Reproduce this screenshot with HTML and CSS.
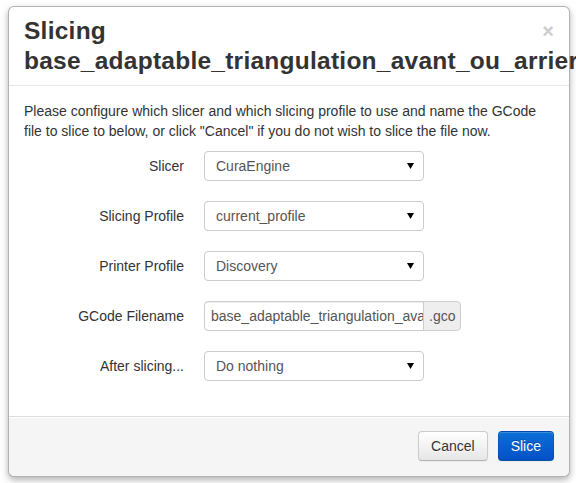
FILE: index.html
```
<!DOCTYPE html>
<html>
<head>
<meta charset="utf-8">
<link rel="stylesheet" href="styles.css">
</head>
<body>
<div class="modal">
  <div class="modal-header">
    <span class="close">×</span>
    <h3>Slicing base_adaptable_triangulation_avant_ou_arrier</h3>
  </div>
  <div class="modal-body">
    <p>Please configure which slicer and which slicing profile to use and name the GCode file to slice to below, or click "Cancel" if you do not wish to slice the file now.</p>
    <div class="form">
      <div class="group">
        <label class="control-label">Slicer</label>
        <div class="controls">
          <div class="select"><span>CuraEngine</span><svg class="arrow" width="7" height="6" viewBox="0 0 7 6"><path d="M0 0H7L3.5 6Z" fill="#000"/></svg></div>
        </div>
      </div>
      <div class="group">
        <label class="control-label">Slicing Profile</label>
        <div class="controls">
          <div class="select"><span>current_profile</span><svg class="arrow" width="7" height="6" viewBox="0 0 7 6"><path d="M0 0H7L3.5 6Z" fill="#000"/></svg></div>
        </div>
      </div>
      <div class="group">
        <label class="control-label">Printer Profile</label>
        <div class="controls">
          <div class="select"><span>Discovery</span><svg class="arrow" width="7" height="6" viewBox="0 0 7 6"><path d="M0 0H7L3.5 6Z" fill="#000"/></svg></div>
        </div>
      </div>
      <div class="group">
        <label class="control-label">GCode Filename</label>
        <div class="controls">
          <div class="input-append"><div class="input">base_adaptable_triangulation_avant_ou_arrier</div><span class="add-on">.gco</span></div>
        </div>
      </div>
      <div class="group">
        <label class="control-label">After slicing...</label>
        <div class="controls">
          <div class="select"><span>Do nothing</span><svg class="arrow" width="7" height="6" viewBox="0 0 7 6"><path d="M0 0H7L3.5 6Z" fill="#000"/></svg></div>
        </div>
      </div>
    </div>
  </div>
  <div class="modal-footer">
    <button class="btn">Cancel</button>
    <button class="btn btn-primary">Slice</button>
  </div>
</div>
</body>
</html>
```

FILE: styles.css
```
html, body {
  margin: 0;
  padding: 0;
  background: #fff;
}
body {
  font-family: "Liberation Sans", Arial, sans-serif;
  font-size: 14px;
  line-height: 20px;
  color: #333;
  width: 576px;
  height: 483px;
  overflow: hidden;
}
.modal {
  margin: 6px 0 0 8px;
  width: 560px;
  background: #fff;
  border: 1px solid rgba(0,0,0,.3);
  border-radius: 6px;
  box-shadow: 0 3px 7px rgba(0,0,0,.3);
}
.modal-header {
  padding: 9px 15px;
  border-bottom: 1px solid #e5e5e5;
}
.modal-header h3 {
  margin: 0;
  font-size: 24.5px;
  letter-spacing: 0.25px;
  line-height: 30px;
  font-weight: bold;
  color: #333;
  white-space: normal;
  word-break: keep-all;
}
.close {
  float: right;
  font-size: 20px;
  font-weight: bold;
  line-height: 20px;
  color: #000;
  opacity: .2;
  margin-top: 5px;
}
.modal-body {
  padding: 15px;
}
.modal-body p {
  margin: 0 0 10px;
}
.group {
  display: flex;
  margin-bottom: 20px;
}
.control-label {
  width: 160px;
  text-align: right;
  padding-top: 5px;
  margin-right: 20px;
}
.select {
  box-sizing: border-box;
  width: 220px;
  height: 30px;
  border: 1px solid #ccc;
  border-radius: 4px;
  background: #fff;
  color: #555;
  display: flex;
  align-items: center;
  padding: 0 6px 0 11px;
}
.select span {
  flex: 1;
}
.arrow {
  display: block;
  margin-right: 3px;
}
.input-append {
  display: flex;
}
.input {
  box-sizing: border-box;
  width: 220px;
  height: 30px;
  padding: 4px 6px;
  border: 1px solid #ccc;
  border-radius: 4px 0 0 4px;
  color: #555;
  white-space: nowrap;
  overflow: hidden;
  box-shadow: inset 0 1px 1px rgba(0,0,0,.075);
}
.add-on {
  box-sizing: border-box;
  height: 30px;
  padding: 4px 5px;
  margin-left: -1px;
  border: 1px solid #ccc;
  border-radius: 0 4px 4px 0;
  background: #eee;
  color: #555;
  position: relative;
}
.modal-footer {
  padding: 14px 15px 15px;
  background: #f5f5f5;
  border-top: 1px solid #ddd;
  border-radius: 0 0 6px 6px;
  box-shadow: inset 0 1px 0 #fff;
  display: flex;
  justify-content: flex-end;
  gap: 10px;
}
.btn {
  font-family: inherit;
  font-size: 14px;
  line-height: 20px;
  padding: 4px 12px;
  border-radius: 4px;
  color: #333;
  text-shadow: 0 1px 1px rgba(255,255,255,.75);
  background: linear-gradient(#fff, #e6e6e6);
  border: 1px solid #ccc;
  border-bottom-color: #b3b3b3;
  box-shadow: inset 0 1px 0 rgba(255,255,255,.2), 0 1px 2px rgba(0,0,0,.05);
}
.btn-primary {
  color: #fff;
  text-shadow: 0 -1px 0 rgba(0,0,0,.25);
  background: linear-gradient(#0b6fd6, #0451c7);
  border-color: rgba(0,0,0,.1) rgba(0,0,0,.1) rgba(0,0,0,.25);
}
```
